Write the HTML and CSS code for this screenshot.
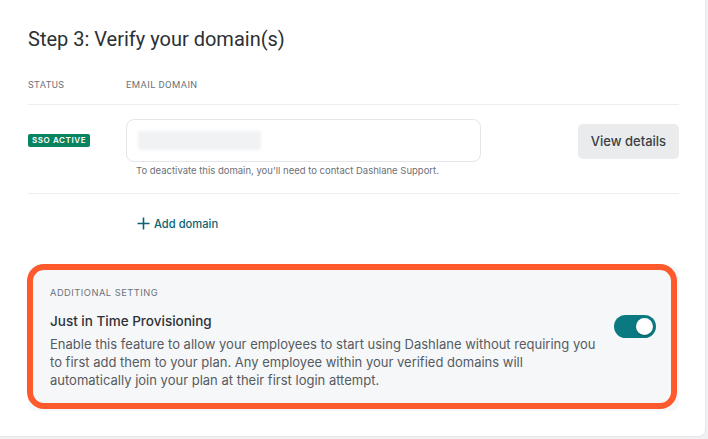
FILE: index.html
```html
<!DOCTYPE html>
<html lang="en">
<head>
  <meta charset="UTF-8" />
  <title>SSO - Verify domains</title>
  <link rel="stylesheet" href="styles.css">
</head>
<body>
  <div class="card">
    <h2 class="title">Step 3: Verify your domain(s)</h2>

    <div class="table-head">
      <span>Status</span>
      <span>Email domain</span>
    </div>

    <div class="domain-row">
      <div class="status"><span class="badge">SSO active</span></div>
      <div class="domain">
        <div class="domain-input"><span class="redacted"></span></div>
        <p class="hint">To deactivate this domain, you'll need to contact Dashlane Support.</p>
      </div>
      <div class="actions"><button class="btn">View details</button></div>
    </div>

    <div class="add-row">
      <a class="add-link" href="#">
        <svg width="13" height="13" viewBox="0 0 13 13"><path d="M6.5 0.5v12M0.5 6.5h12" stroke="currentColor" stroke-width="1.6" fill="none"/></svg>
        Add domain
      </a>
    </div>

    <div class="setting">
      <div class="setting-text">
        <div class="setting-label">Additional setting</div>
        <div class="setting-title">Just in Time Provisioning</div>
        <p class="setting-desc">Enable this feature to allow your employees to start using Dashlane without requiring you to first add them to your plan. Any employee within your verified domains will automatically join your plan at their first login attempt.</p>
      </div>
      <div class="toggle on"><span class="knob"></span></div>
      <div class="highlight"></div>
    </div>
  </div>
</body>
</html>
```

FILE: styles.css
```css
* {
  margin: 0;
  padding: 0;
  box-sizing: border-box;
}

body {
  background: #eef0f2;
  font-family: "Inter", "Noto Sans", sans-serif;
  color: #2d3236;
  overflow: hidden;
}

.card {
  width: 714px;
  height: 445px;
  margin: -8px 0 0 -8px;
  padding: 32px 26px 0 35px;
  background: #fff;
  border: 1px solid #e6e8ea;
  border-radius: 8px;
}

.title {
  font-family: "Roboto", sans-serif;
  font-weight: 400;
  font-size: 20px;
  line-height: 28px;
  color: #2b3034;
}

.table-head {
  display: flex;
  margin-top: 25px;
  padding-bottom: 12px;
  border-bottom: 1px solid #eceef0;
  font-family: "Roboto", sans-serif;
  font-size: 9.5px;
  line-height: 14px;
  letter-spacing: 0.4px;
  text-transform: uppercase;
  color: #6c737a;
}

.table-head span:first-child {
  width: 98px;
}

.domain-row {
  display: grid;
  grid-template-columns: 98px 355px 1fr;
  padding: 14px 0 15px;
  border-bottom: 1px solid #eceef0;
}

.status,
.actions {
  height: 43px;
  display: flex;
  align-items: center;
}

.actions {
  justify-content: flex-end;
}

.badge {
  display: inline-block;
  background: #0a8360;
  color: #fff;
  font-size: 8px;
  font-weight: 600;
  letter-spacing: 0.6px;
  line-height: 13px;
  padding: 0 4px;
  border-radius: 2px;
  text-transform: uppercase;
}

.domain-input {
  height: 43px;
  border: 1px solid #e4e6e9;
  border-radius: 8px;
  padding: 11px 0 0 11px;
}

.redacted {
  display: block;
  width: 123px;
  height: 19px;
  background: #f1f2f4;
  border-radius: 3px;
  filter: blur(1.5px);
}

.hint {
  margin: 2px 0 0 10px;
  font-size: 9.5px;
  line-height: 14px;
  color: #6b7177;
}

.btn {
  width: 101px;
  height: 35px;
  margin-top: 1px;
  border: none;
  border-radius: 5px;
  background: #e9ebed;
  color: #3a3f44;
  font-family: inherit;
  font-size: 13px;
  font-weight: 500;
}

.add-row {
  padding: 20px 0 0 109px;
}

.add-link {
  display: inline-flex;
  align-items: center;
  gap: 4px;
  font-size: 11.2px;
  line-height: 16px;
  font-weight: 500;
  color: #0d6470;
  text-decoration: none;
}

.setting {
  position: relative;
  display: flex;
  justify-content: space-between;
  margin-top: 32px;
  padding: 20px 23px 22px 22px;
  background: #f6f7f9;
  border-radius: 8px;
}

.setting-label {
  font-size: 9.3px;
  line-height: 14px;
  letter-spacing: 0.5px;
  text-transform: uppercase;
  color: #6c737a;
}

.setting-title {
  margin-top: 11px;
  font-size: 13.5px;
  line-height: 20px;
  font-weight: 500;
  color: #2d3236;
}

.setting-desc {
  margin-top: 4px;
  max-width: 556px;
  font-size: 13px;
  line-height: 18px;
  color: #555b61;
}

.toggle {
  flex: none;
  width: 42px;
  height: 23px;
  margin-top: 29px;
  border-radius: 12px;
  background: #0b7a80;
  padding: 3px;
  display: flex;
  justify-content: flex-end;
}

.knob {
  width: 17px;
  height: 17px;
  border-radius: 50%;
  background: #fff;
  box-shadow: 0 1px 2px rgba(0, 0, 0, 0.25);
}

/* annotation frame drawn over the setting panel */
.highlight {
  position: absolute;
  top: -2px;
  left: -1px;
  right: 2px;
  bottom: 2px;
  border: 6px solid #ff5a2d;
  border-radius: 17px;
  pointer-events: none;
}
```
